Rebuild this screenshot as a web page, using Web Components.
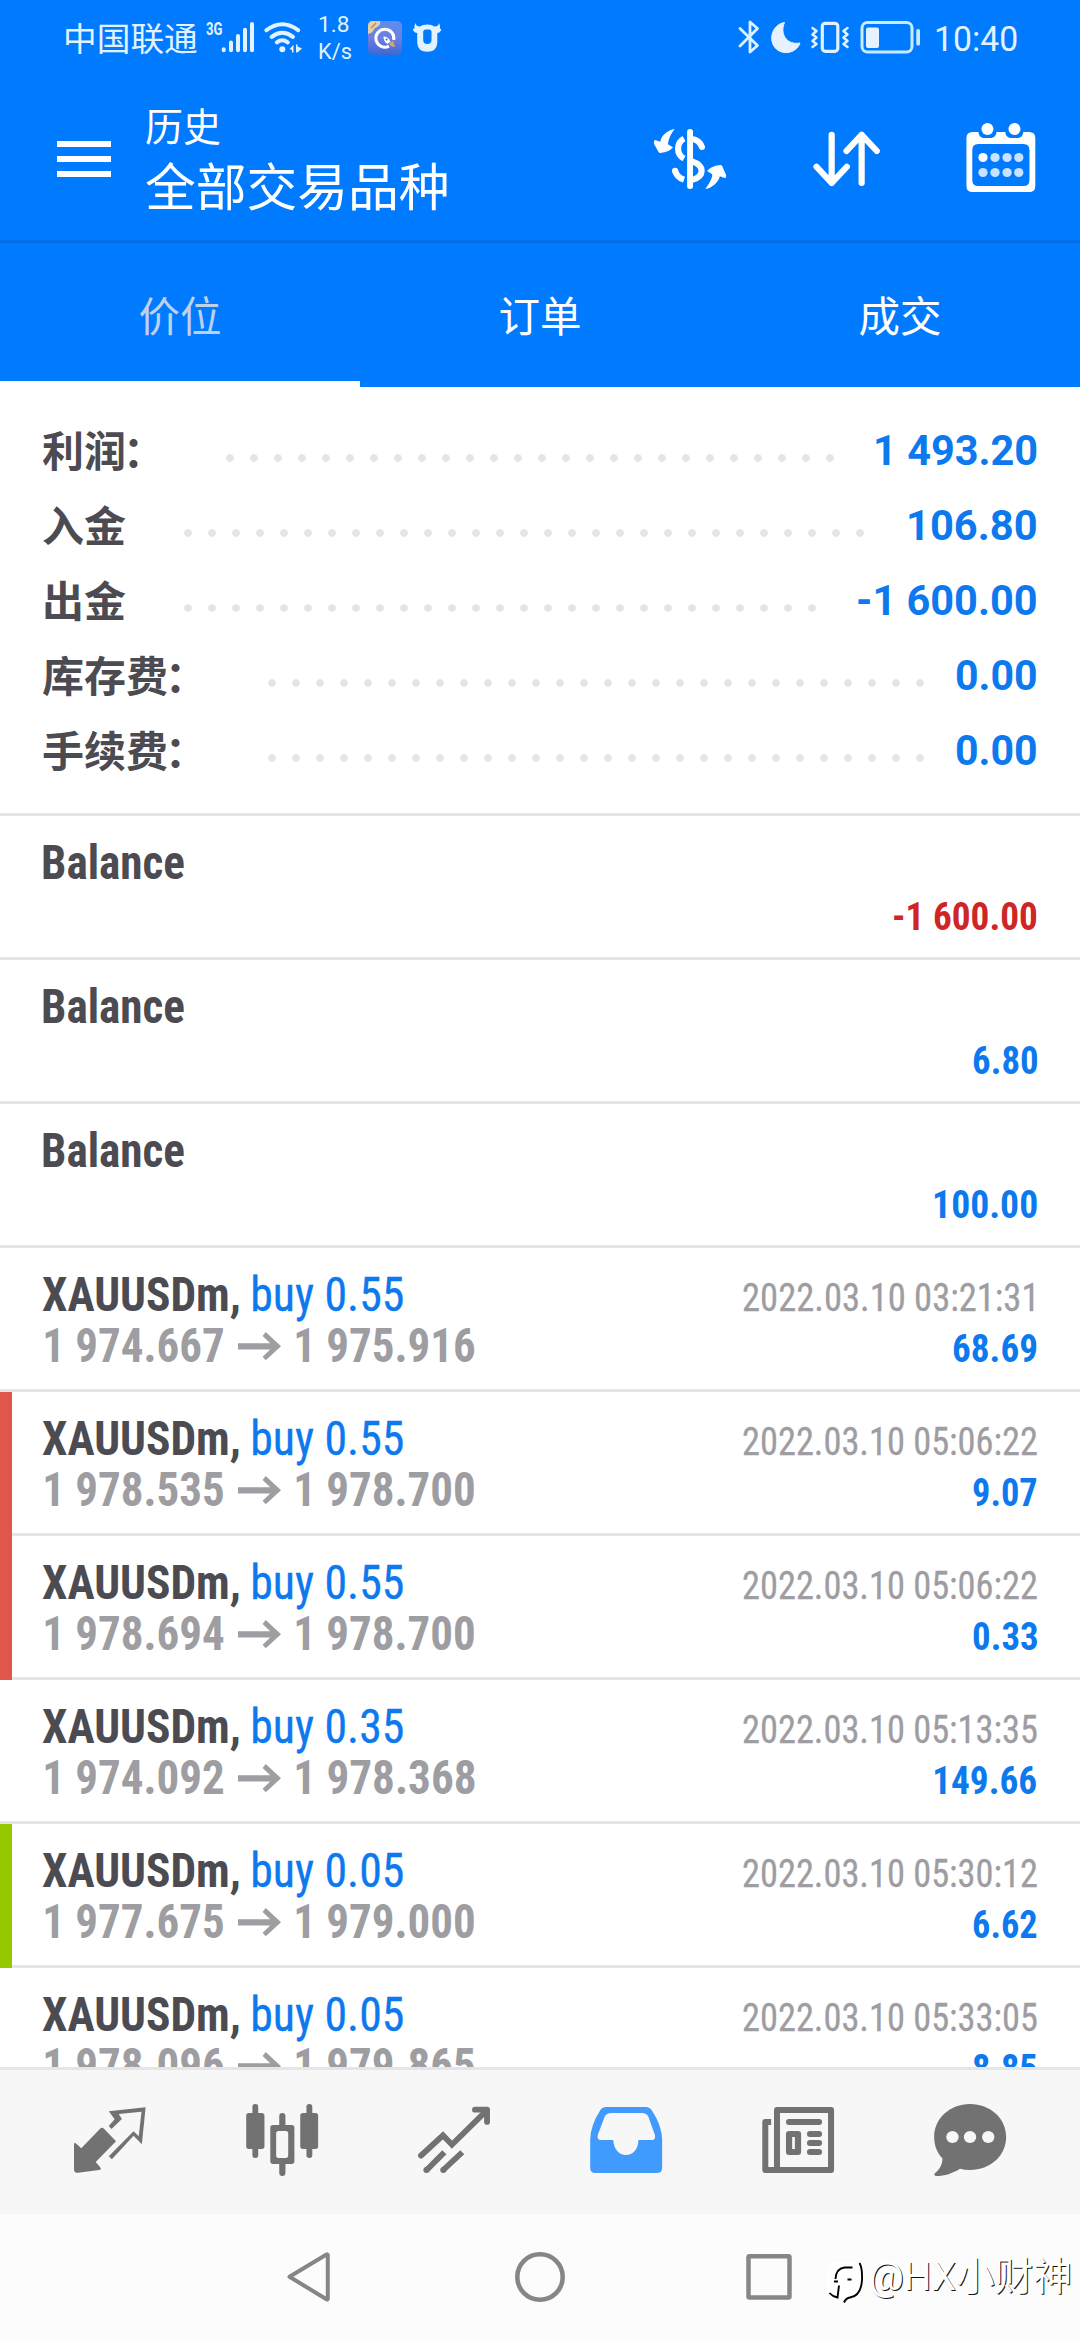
<!DOCTYPE html>
<html lang="zh-CN">
<head>
<meta charset="utf-8">
<title>历史</title>
<style>
html,body{margin:0;padding:0;background:#fff}
body{width:1080px;height:2340px;overflow:hidden;font-family:Roboto,"Noto Sans CJK SC",sans-serif}
</style>
</head>
<body>
<history-app></history-app>
<script>
const define = (name, html, init) => customElements.define(name, class extends HTMLElement {
  constructor() {
    super();
    this.attachShadow({ mode: 'open' }).innerHTML = html;
  }
  connectedCallback() { if (init) init.call(this, this.shadowRoot); }
});

/* Icons: [width, height, viewBox, markup] */
const ICONS = {
  signal: [48, 80, '206 0 48 80', '<g stroke="#e2f3ff" stroke-width="4" stroke-linecap="round"><path d="M223.7 49.2v1M231 42.5v7.8M238 36v14.3M245 29.8v20.5M252 24v26.300"/></g>'],
  wifi: [40, 80, '264 0 40 80', '<g fill="none" stroke="#e2f3ff" stroke-width="4" stroke-linecap="round"><path d="M266.500 30.200q15.800-12 31.600 0M271.700 36.800q10.600-8 21.200 0M276.900 42.300q5.400-4 10.800 0"/></g><circle cx="282.300" cy="49.300" r="3" fill="#e2f3ff"/><path d="M289.500 49l4-4v7.500h-1.500V50zM296 44.500h1.500v2l4.500 2-4.500 4H296z" fill="#e2f3ff"/>'],
  rocket: [34, 80, '368 0 34 80', '<defs><linearGradient id="g" x2="0" y2="1"><stop offset="0" stop-color="#5f8df0"/><stop offset=".5" stop-color="#6d7fe0"/><stop offset="1" stop-color="#3a69d4"/></linearGradient></defs><rect x="368" y="21" width="34" height="34" rx="5" fill="url(#g)"/><path d="M368 34V26q0-5 5-5h7q1 4-3 6-3 1-4 4-2 3-5 3z" fill="#e9cfa6"/><path d="M371 28l5-5" stroke="#b78d52" stroke-width="1.500"/><path d="M389 46.200A9 9 0 1 1 393.700 40" fill="none" stroke="#fff" stroke-width="3"/><path d="M383.500 36.500q4.500 0 7 5l-3 2.500q-4-2-4-7.500z" fill="#fff"/><circle cx="386.500" cy="39.500" r="1" fill="#4a62b8"/><path d="M389 43l4-2 2 6q-5 0-6-4z" fill="#d8a675"/>'],
  bull: [30, 80, '412 0 30 80', '<path fill-rule="evenodd" fill="#e2f3ff" d="M415.500 23Q416 26.500 420 26.500Q422.500 24.500 427.200 24.500Q432 24.500 434.500 26.500Q438.500 26.500 439 23Q440.500 26 440 28.500Q442 29 441 30.500Q439.500 33 437.300 33V43Q436.500 51.800 427.200 51.800Q418 51.800 417.200 43V33Q415 33 413.200 30.500Q412.200 29 414.500 28.500Q414 26 415.500 23ZM423.200 32V40Q423.200 44 427.300 44Q431.500 44 431.500 40V32Q431.500 29.500 429 29.500H425.700Q423.200 29.500 423.200 32Z"/>'],
  bluetooth: [22, 80, '739 0 22 80', '<path d="M741 28.500l17.500 17-7.500 6.500V22l7.500 6.500L741 46" fill="none" stroke="#dff2ff" stroke-width="2.800" stroke-linecap="round" stroke-linejoin="round"/>'],
  moon: [30, 80, '772 0 30 80', '<path d="M785.500 22.500c-5 11 2 23 15.500 20.500-3.500 11-20 13.500-26.500 2.500-5-10 1-21.500 11-23z" fill="#e6f2ff" stroke="#e6f2ff" stroke-linejoin="round"/>'],
  vibrate: [40, 80, '811 0 40 80', '<rect x="823.300" y="23.300" width="15.500" height="28" rx="3" fill="none" stroke="#dff2ff" stroke-width="3.200"/><path d="M813.500 28l4 3-4 3.500 4 3-4 3.500 4 3-4 3M848.500 28l-4 3 4 3.500-4 3 4 3.500-4 3 4 3" fill="none" stroke="#dff2ff" stroke-width="2.600" stroke-linecap="round" stroke-linejoin="round"/>'],
  battery: [61, 80, '861 0 61 80', '<rect x="863" y="22.500" width="50" height="29.500" rx="5.500" fill="none" stroke="#c9ebff" stroke-width="3"/><rect x="867" y="27.500" width="13" height="20.500" rx="2" fill="#e6f2ff"/><rect x="917.300" y="29" width="3.700" height="16.500" rx="1.500" fill="#c9ebff"/>'],
  menu: [54, 160, '57 80 54 160', '<path d="M57 141h54v6H57zM57 156h54v6H57zM57 171h54v6H57z" fill="#fff"/>'],
  dollar: [76, 160, '325 0 220.700 480', '<g fill="none" stroke="#fff" stroke-width="18"><path d="M441 177q21 2 29 24" stroke-linecap="round"/><path d="M441 244C478 256 479 288 441 300"/><path d="M418 176C395 188 395 223 418 236"/><path d="M392 272q5 20 26 27"/></g><circle cx="392" cy="272" r="9" fill="#fff"/><rect x="427" y="147" width="17" height="180" rx="8" fill="#fff"/><path d="M391 147C372 150 352 165 349 185L334 180Q330 181 331 192L344 216Q347 220 352 218C364 218 378 212 386 202L371 193C373 176 380 160 391 147ZM480 327C494 306 499 298 500 283L485 273C494 262 510 256 524 255Q527 255 529 259L540 284Q541 294 536 294L522 289C518 306 500 325 480 327Z" fill="#fff"/>'],
  sort: [72, 160, '785 0 209 480', '<path d="M845 164V309M801 260L845 309L889 260M932 309V164M888 213L932 164L976 213" fill="none" stroke="#fff" stroke-width="18" stroke-linecap="round" stroke-linejoin="round"/>'],
  calendar: [76, 160, '1227 0 220.700 480', '<path fill-rule="evenodd" fill="#fff" d="M1255 156H1272C1272 166 1278 174 1290 174H1306C1318 174 1324 166 1324 156H1350C1350 166 1356 174 1368 174H1384C1396 174 1402 166 1402 156H1419Q1437 156 1437 175V317Q1437 336 1419 336H1255Q1237 336 1237 317V175Q1237 156 1255 156ZM1271 192Q1254 192 1254 210V300Q1254 318 1271 318H1403Q1420 318 1420 300V210Q1420 192 1403 192Z"/><ellipse cx="1298" cy="147" rx="17.500" ry="18" fill="#fff"/><ellipse cx="1376.500" cy="147" rx="17.500" ry="18" fill="#fff"/><g fill="#c8e2ff"><circle cx="1285" cy="232.500" r="13.500" fill="#fff"/><circle cx="1320" cy="232.500" r="13.500"/><circle cx="1355" cy="232.500" r="13.500"/><circle cx="1389" cy="232.500" r="13.500"/><circle cx="1285" cy="277.500" r="13.500"/><circle cx="1320" cy="277.500" r="13.500"/><circle cx="1355" cy="277.500" r="13.500"/><circle cx="1389" cy="277.500" r="13.500"/></g>'],
  quotes: [84, 84, '197.500 420 244 252', '<path d="M215 552Q216 547 220 550L236 565L290 507Q296 500 302 506L337 544L278 606L292 623Q295 629 288 630L226 638Q215 640 215 628ZM316 454L423 442L412 553L388 527L325 598L316 589L388 514L403 529L411 455L345 462L354 477L324 507L316 498L333 478Z" fill="#727272"/>'],
  candles: [84, 84, '696 420 244 252', '<g fill="#727272"><rect x="714" y="459" width="53" height="108" rx="8"/><rect x="732" y="432" width="17" height="162" rx="8"/><rect x="871" y="459" width="52" height="108" rx="8"/><rect x="889" y="432" width="17" height="162" rx="8"/><path fill-rule="evenodd" d="M792 495H846Q854 495 854 503V604Q854 612 846 612H792Q784 612 784 604V503Q784 495 792 495ZM808 513Q801 513 801 521V586Q801 594 808 594H829Q836 594 836 586V521Q836 513 829 513Z"/><path d="M810 496V468Q810 459 819 459T828 468V496ZM810 611V639Q810 648 819 648T828 639V611Z"/></g>'],
  trade: [84, 84, '1196 420 244 252', '<g fill="none" stroke="#727272" stroke-width="17" stroke-linecap="round" stroke-linejoin="round"><path stroke-linejoin="miter" d="M1222 587L1286 526L1312 554L1412 452"/><path d="M1379 449H1414V486"/><path stroke-linecap="butt" d="M1238 631L1290 577M1286 631L1342 577"/></g><circle cx="1238" cy="630" r="9" fill="#727272"/><circle cx="1287" cy="630" r="9" fill="#727272"/>'],
  history: [84, 84, '127 420 244 252', '<path fill-rule="evenodd" fill="#419bff" d="M190 441H308Q317 441 323 449Q354 497 354 540V623Q354 639 339 639H160Q145 639 145 623V540Q145 497 175 449Q180 441 190 441ZM206 459Q192 459 187 470L167 525Q164 540 176 540H212C213 567 229 585 249 585C269 585 285 567 285 540H324Q336 540 333 525L314 470Q309 459 294 459Z"/>'],
  news: [84, 84, '627 420 244 252', '<g fill="none" stroke="#727272" stroke-width="17.500" stroke-linejoin="round"><path d="M688 450H845V630H688Z"/><path d="M671 486H654V630H690"/></g><g fill="#727272"><rect x="714" y="477" width="105" height="18" rx="9"/><path fill-rule="evenodd" d="M723 513H749Q758 513 758 522V576Q758 585 749 585H723Q714 585 714 576V522Q714 513 723 513ZM732 531V567H740V531Z"/><rect x="775" y="513" width="44" height="18" rx="9"/><rect x="775" y="540" width="44" height="18" rx="9"/><rect x="775" y="567" width="44" height="18" rx="9"/></g>'],
  chat: [84, 84, '1126 420 244 252', '<path d="M1168 595C1152 578 1144 556 1144 531C1144 475 1190 432 1248 432C1307 432 1353 475 1353 531C1353 587 1307 630 1248 630Q1232 630 1219 626C1197 640 1175 648 1150 648Q1142 647 1146 640C1160 628 1168 615 1168 595Z" fill="#727272"/><g fill="#f7f7f7"><circle cx="1197" cy="531" r="18"/><circle cx="1248" cy="531" r="18"/><circle cx="1301" cy="531" r="18"/></g>'],
  back: [50, 126, '283 2214 50 126', '<path d="M289.500 2276.800L326.500 2254.500Q327.800 2254 327.800 2255.500V2298.500Q327.800 2300 326.500 2299.200Z" fill="none" stroke="#868686" stroke-width="4" stroke-linejoin="round"/>'],
  home: [50, 126, '515 2214 50 126', '<circle cx="540" cy="2277" r="22.700" fill="none" stroke="#868686" stroke-width="4.600"/>'],
  recent: [50, 126, '744 2214 50 126', '<rect x="748.500" y="2256.300" width="41" height="41.200" rx="1" fill="none" stroke="#868686" stroke-width="4.500"/>'],
  stamp: [38, 126, '826 2214 38 126', '<rect x="827" y="2261.500" width="34" height="36" rx="10" fill="#fff"/><path d="M829.500 2293q3 3.500 8 4.500l1.500-12M834 2281.500h4M835.500 2279q.5-10.500 9-11.500h8M847.500 2279.500h4M859.500 2263q3 5 2.500 17-1 16-12 17.500-4 .5-6 5" fill="none" stroke="#000" stroke-width="1.900"/>'],
  arrow: [43, 34, '691 264 124 103', '<path d="M691 310H784L762 288L771 276L815 319L771 362L762 351L784 329H691Z" fill="#9d9da2"/>']
};

define('ui-icon', '<style>:host{display:block;flex:none}svg{display:block}</style>', function (root) {
  const [w, h, box, body] = ICONS[this.getAttribute('name')];
  root.innerHTML += `<svg width="${w}" height="${h}" viewBox="${box}" preserveAspectRatio="none">${body}</svg>`;
});

/* Text narrowed horizontally so that its ink spans exactly the "ink" width. */
const pen = document.createElement('canvas').getContext('2d');
define('fit-text', '<style>:host{display:block;flex:none;white-space:nowrap}span{display:block;width:max-content;transform-origin:0 0}</style><span><slot></slot></span>', function (root) {
  const cs = getComputedStyle(this), ink = +this.getAttribute('ink');
  pen.font = `${cs.fontWeight} ${cs.fontSize} ${cs.fontFamily}`;
  const m = pen.measureText(this.textContent);
  const k = ink / (m.actualBoundingBoxRight + m.actualBoundingBoxLeft);
  this.style.width = ink + 'px';
  root.querySelector('span').style.transform = `translateX(${m.actualBoundingBoxLeft * k}px) scaleX(${k})`;
});

define('status-bar', `<style>
  :host{display:flex;height:80px;color:#e2f3ff}
  .carrier{margin-left:66px;font-size:33.500px;line-height:80px}
  .net{margin:20px 0 0 8.500px;font-size:18.500px;line-height:18px;font-weight:700}
  .net+ui-icon{margin-left:-16px}
  .speed{margin:10.500px 0 0 15px;font-size:22px;line-height:27px}
  .time{margin-left:15px;font-size:35.500px;line-height:79px}
  </style>
  <fit-text class="carrier" ink="131.300">中国联通</fit-text>
  <fit-text class="net" ink="16">3G</fit-text>
  <ui-icon name="signal"></ui-icon>
  <ui-icon name="wifi" style="margin-left:10px"></ui-icon>
  <div class="speed"><fit-text ink="30">1.8</fit-text><fit-text ink="32.500">K/s</fit-text></div>
  <ui-icon name="rocket" style="margin-left:16.500px"></ui-icon>
  <ui-icon name="bull" style="margin-left:10px"></ui-icon>
  <ui-icon name="bluetooth" style="margin-left:auto"></ui-icon>
  <ui-icon name="moon" style="margin-left:11px"></ui-icon>
  <ui-icon name="vibrate" style="margin-left:9px"></ui-icon>
  <ui-icon name="battery" style="margin-left:10px"></ui-icon>
  <fit-text class="time" ink="80.300" style="margin-right:63.700px">10:40</fit-text>`);

define('tool-bar', `<style>
  :host{display:flex;height:160px;border-bottom:3px solid #006ee6;color:#fff}
  .menu{margin-left:57px}
  .titles{margin:26px auto 0 34.700px}
  .sub{font-size:39px;line-height:44px;padding-bottom:10px}
  .main{font-size:51px;line-height:58px}
  </style>
  <ui-icon class="menu" name="menu"></ui-icon>
  <div class="titles"><fit-text class="sub" ink="74">历史</fit-text><fit-text class="main" ink="300.600">全部交易品种</fit-text></div>
  <ui-icon name="dollar" style="margin-right:82.500px"></ui-icon>
  <ui-icon name="sort" style="margin-right:80px"></ui-icon>
  <ui-icon name="calendar" style="margin-right:41.500px"></ui-icon>`);

define('tab-item', `<style>
  :host{display:block;flex:1;box-sizing:border-box;height:144px;padding-top:41px;font-size:41.500px;line-height:68px;text-align:center;color:#fff}
  :host([active]){color:#bfd0ea;border-bottom:6px solid #fff}
  </style><slot></slot>`);

class ProfitLine extends HTMLElement {
  connectedCallback() {
    const g = n => this.getAttribute(n);
    this.attachShadow({ mode: 'open' }).innerHTML = `<style>
      :host{display:flex;height:75px;padding:0 43.500px 0 42px;font-size:42px;line-height:75px;font-weight:700;color:#4c4b51}
      .label{padding-top:1.500px}
      ::slotted(span){margin:0 3px 0 -3px}
      i{flex:none;height:24px;margin:33px auto 0 50.300px;background:radial-gradient(circle,#e5e5e5 3.500px,transparent 4.200px) 0 0/24px 24px}
      fit-text{color:#0c79ee}
      </style><div class="label"><slot></slot></div><i style="width:${g('dots') * 24}px"></i><fit-text ink="${g('ink')}">${g('value')}</fit-text>`;
  }
}
customElements.define('profit-line', ProfitLine);

class HistoryRow extends HTMLElement {
  connectedCallback() {
    const g = n => this.getAttribute(n);
    const mark = g('mark');
    const date = g('date');
    const tail = date && date.endsWith('1');
    const deal = g('from') ? `
      <div class="line"><fit-text class="name" ink="196.300">XAUUSDm,</fit-text><fit-text class="side" ink="149.800">buy ${g('lot')}</fit-text><fit-text class="date" ink="${tail ? 290.6 : 293.7}" style="margin-right:${tail ? 3 : 0}px">${date}</fit-text></div>
      <div class="line"><fit-text class="price first" ink="178.500">${g('from')}</fit-text><ui-icon name="arrow"></ui-icon><fit-text class="price" ink="178.500">${g('to')}</fit-text>` : `
      <div class="line"><fit-text class="name balance" ink="141">Balance</fit-text></div><div class="line low">`;
    this.attachShadow({ mode: 'open' }).innerHTML = `<style>
      :host{display:flex;height:144px;flex:none}
      .mark{width:12px;flex:none;background:${mark || 'transparent'}}
      .body{flex:1;box-sizing:border-box;height:144px;border-bottom:3px solid #e5e5e5;padding:21px 43.500px 0 30.300px}
      :host(:not([mark])) .mark{box-sizing:border-box;border-bottom:3px solid #e5e5e5}
      .line{display:flex;align-items:baseline;height:51px;line-height:51px}
      .low{padding-top:3.500px}
      fit-text{font-family:"Roboto Condensed",Roboto,sans-serif}
      .name,.side,.price{font-size:48px}
      .name{font-weight:700;color:#4c4b51}
      .balance{margin-left:1.200px}
      .side{margin-left:14.400px;color:#0c79ee;-webkit-text-stroke:.3px #0c79ee}
      .date{margin-left:auto;font-size:39px;color:#9d9da2;-webkit-text-stroke:.3px #9d9da2}
      .price{font-weight:700;color:#9d9da2}
      .first{margin-left:2.800px}
      ui-icon{margin:0 15.300px 0 14.200px;align-self:flex-start;padding-top:8px}
      .value{margin-left:auto;font-size:39px;font-weight:700;color:${g('tone') || '#0c79ee'}}
      </style><div class="mark"></div><div class="body">${deal}<fit-text class="value" ink="${g('ink')}">${g('value')}</fit-text></div></div>`;
  }
}
customElements.define('history-row', HistoryRow);

define('nav-bar', `<style>
  :host{display:flex;box-sizing:border-box;height:147px;padding:0 24px;border-top:3px solid #e5e5e5;background:#f7f7f7;align-items:flex-start}
  div{flex:1;display:flex;justify-content:center;padding-top:30px}
  </style>
  <div><ui-icon name="quotes"></ui-icon></div><div><ui-icon name="candles"></ui-icon></div><div><ui-icon name="trade"></ui-icon></div>
  <div><ui-icon name="history"></ui-icon></div><div><ui-icon name="news"></ui-icon></div><div><ui-icon name="chat"></ui-icon></div>`);

define('system-bar', `<style>
  :host{display:flex;height:126px;background:#fcfcfc}
  fit-text{margin-left:6.700px;font-size:39px;line-height:127px;color:#fff;text-shadow:1px 1px 0 #111,0 0 2px #fff}
  </style>
  <ui-icon name="back" style="margin-left:283px"></ui-icon>
  <ui-icon name="home" style="margin-left:182px"></ui-icon>
  <ui-icon name="recent" style="margin-left:179px"></ui-icon>
  <ui-icon name="stamp" style="margin-left:32px"></ui-icon>
  <fit-text ink="199">@HX小财神</fit-text>`);

define('history-app', `<style>
  :host{display:flex;flex-direction:column;width:1080px;height:2340px;overflow:hidden;background:#fff}
  header{background:#007aff;flex:none}
  .tabs{display:flex}
  .summary{flex:none;box-sizing:border-box;height:429px;padding-top:26px;border-bottom:3px solid #e5e5e5}
  main{flex:1;min-height:0;overflow:hidden;display:flex;flex-direction:column}
  nav-bar,system-bar{flex:none}
  </style>
  <header><status-bar></status-bar><tool-bar></tool-bar>
    <div class="tabs"><tab-item active>价位</tab-item><tab-item>订单</tab-item><tab-item>成交</tab-item></div></header>
  <main>
    <section class="summary">
      <profit-line dots="26" value="1 493.20" ink="161">利润<span>：</span></profit-line>
      <profit-line dots="29" value="106.80" ink="127.500">入金</profit-line>
      <profit-line dots="27" value="-1 600.00" ink="178.500">出金</profit-line>
      <profit-line dots="28" value="0.00" ink="80.500">库存费<span>：</span></profit-line>
      <profit-line dots="28" value="0.00" ink="80.500">手续费<span>：</span></profit-line>
    </section>
    <history-row value="-1 600.00" ink="142.300" tone="#d02525"></history-row>
    <history-row value="6.80" ink="64"></history-row>
    <history-row value="100.00" ink="101.500"></history-row>
    <history-row lot="0.55" from="1 974.667" to="1 975.916" date="2022.03.10 03:21:31" value="68.69" ink="83.300"></history-row>
    <history-row mark="#df5748" lot="0.55" from="1 978.535" to="1 978.700" date="2022.03.10 05:06:22" value="9.07" ink="64"></history-row>
    <history-row mark="#df5748" lot="0.55" from="1 978.694" to="1 978.700" date="2022.03.10 05:06:22" value="0.33" ink="64"></history-row>
    <history-row lot="0.35" from="1 974.092" to="1 978.368" date="2022.03.10 05:13:35" value="149.66" ink="101.500"></history-row>
    <history-row mark="#96c800" lot="0.05" from="1 977.675" to="1 979.000" date="2022.03.10 05:30:12" value="6.62" ink="64"></history-row>
    <history-row lot="0.05" from="1 978.096" to="1 979.865" date="2022.03.10 05:33:05" value="8.85" ink="64"></history-row>
  </main>
  <nav-bar></nav-bar>
  <system-bar></system-bar>`);
</script>
</body>
</html>
